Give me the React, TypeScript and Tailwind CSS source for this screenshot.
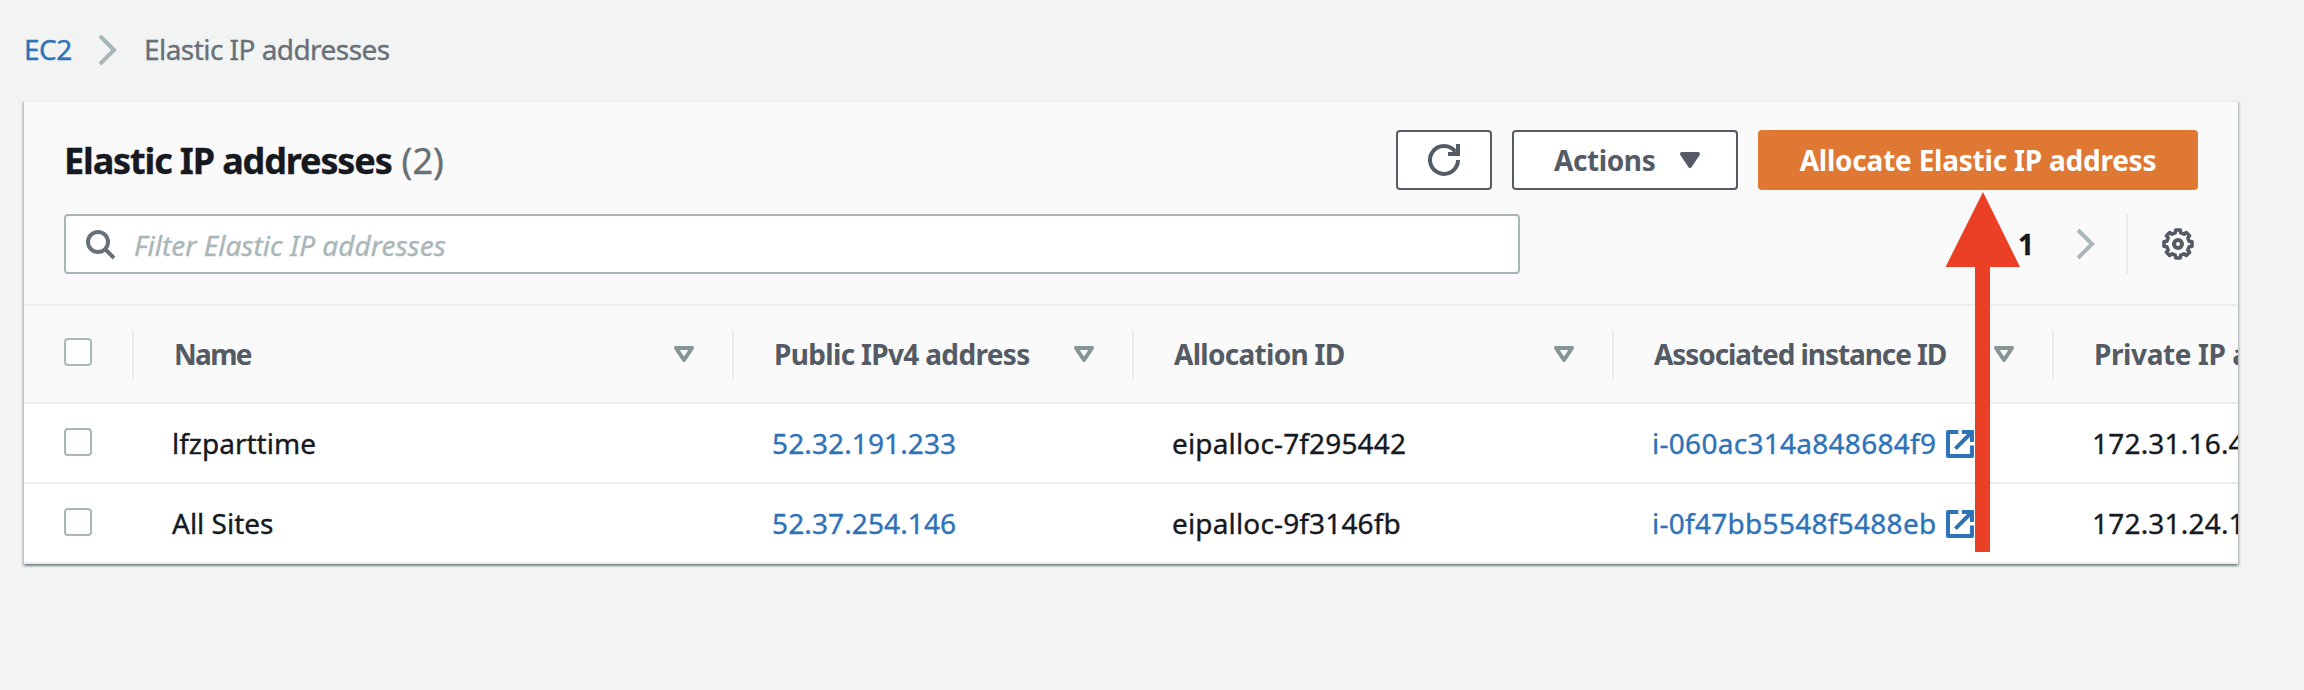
import type { ReactNode } from "react";

type Column = { label: string; width: string; tracking: string; sortable: boolean };

const columns: Column[] = [
  { label: "Name", width: "w-[600px]", tracking: "tracking-[-1.7px]", sortable: true },
  { label: "Public IPv4 address", width: "w-[400px]", tracking: "tracking-[-0.67px]", sortable: true },
  { label: "Allocation ID", width: "w-[480px]", tracking: "tracking-[-0.7px]", sortable: true },
  { label: "Associated instance ID", width: "w-[440px]", tracking: "tracking-[-1.08px]", sortable: true },
  { label: "Private IP address", width: "w-[400px]", tracking: "tracking-[-0.4px]", sortable: false },
];

const rows = [
  {
    name: "lfzparttime",
    publicIp: "52.32.191.233",
    allocation: "eipalloc-7f295442",
    instance: "i-060ac314a848684f9",
    privateIp: "172.31.16.45",
  },
  {
    name: "All Sites",
    publicIp: "52.37.254.146",
    allocation: "eipalloc-9f3146fb",
    instance: "i-0f47bb5548f5488eb",
    privateIp: "172.31.24.12",
  },
];

function Icon({ children, className }: { children: ReactNode; className: string }) {
  return (
    <svg
      viewBox="0 0 16 16"
      fill="none"
      stroke="currentColor"
      strokeWidth={2}
      className={`size-8 shrink-0 overflow-visible ${className}`}
    >
      {children}
    </svg>
  );
}

function ChevronRight({ className }: { className: string }) {
  return (
    <Icon className={className}>
      <path d="M4 1l7 7-7 7" />
    </Icon>
  );
}

function gearPath() {
  const points: string[] = [];
  const corners = [
    [-14, 5.75],
    [-9, 7.1],
    [9, 7.1],
    [14, 5.75],
  ];
  for (let tooth = 0; tooth < 8; tooth++) {
    for (const [offset, radius] of corners) {
      const angle = ((tooth * 45 + offset) * Math.PI) / 180;
      points.push(`${(8 + radius * Math.sin(angle)).toFixed(2)} ${(8 - radius * Math.cos(angle)).toFixed(2)}`);
    }
  }
  return `M${points.join("L")}Z`;
}

function Checkbox({ className }: { className: string }) {
  return <span className={`ml-10 block size-7 rounded-[4px] border-2 border-[#aab7b8] bg-white ${className}`} />;
}

export default function App() {
  return (
    <div className="relative h-[690px] w-[2304px] overflow-hidden bg-[#f2f3f3] font-['Noto_Sans','Open_Sans',sans-serif] text-[28px] leading-[38px] text-[#16191f] [-webkit-text-stroke:0.35px]">
      <nav className="flex h-[100px] items-center pl-6">
        <a className="mb-0.5 w-[68px] tracking-[-0.5px] text-[#2e73b8]">EC2</a>
        <ChevronRight className="text-[#aab7b8]" />
        <span className="mb-0.5 ml-5 tracking-[-0.55px] text-[#687078]">Elastic IP addresses</span>
      </nav>

      <section className="ml-6 w-[2214px] border-t-2 border-[#eaeded] bg-white shadow-[0_2px_2px_0_rgba(0,28,36,0.3),2px_2px_2px_0_rgba(0,28,36,0.15),-2px_2px_2px_0_rgba(0,28,36,0.15)]">
        <div className="overflow-hidden">
          <header className="h-[204px] border-b-2 border-[#eaeded] bg-[#fafafa] pt-7 pr-10 pl-10">
            <div className="flex h-[60px] items-center">
              <h1 className="mt-0.5 text-[36px] leading-[48px] font-bold tracking-[-1.13px]">Elastic IP addresses</h1>
              <span className="mt-0.5 ml-[10px] text-[36px] leading-[48px] text-[#687078]">(2)</span>
              <div className="ml-auto flex gap-5 font-bold text-[#545b64] [-webkit-text-stroke:0px]">
                <button className="flex h-[60px] w-24 items-center justify-center rounded-[4px] border-2 border-[#545b64] bg-white">
                  <Icon className="">
                    <path d="M10 5h5V0" />
                    <path d="M15 8a7 7 0 1 1-1.3-4.1" />
                  </Icon>
                </button>
                <button className="flex h-[60px] w-[226px] items-center rounded-[4px] border-2 border-[#545b64] bg-white pl-10">
                  <span className="w-[120px] text-left tracking-[-0.4px]">Actions</span>
                  <Icon className="">
                    <path d="M4 5h8l-4 6z" fill="currentColor" strokeLinejoin="round" />
                  </Icon>
                </button>
                <button className="flex h-[60px] w-[440px] items-center justify-center rounded-[4px] bg-[#de7832] text-white">
                  <span className="tracking-[-0.22px] whitespace-nowrap">Allocate Elastic IP address</span>
                </button>
              </div>
            </div>

            <div className="mt-6 flex h-[60px] items-center">
              <div className="flex h-[60px] w-[1456px] items-center rounded-[4px] border-2 border-[#aab7b8] bg-white pl-[18px]">
                <Icon className="text-[#687078]">
                  <circle cx="7" cy="7" r="5" />
                  <path d="M15 15l-4.5-4.5" />
                </Icon>
                <span className="mt-0.5 ml-[18px] tracking-[0.03px] text-[#aab7b8] italic">Filter Elastic IP addresses</span>
              </div>
              <div className="ml-auto flex h-[60px] items-center">
                <span className="w-[52px] font-bold">1</span>
                <ChevronRight className="text-[#aab7b8]" />
                <span className="ml-6 h-[60px] w-0.5 bg-[#eaeded]" />
                <Icon className="mr-1 ml-[34px] text-[#545b64]">
                  <path d={gearPath()} strokeWidth={1.8} strokeLinejoin="round" />
                  <circle cx="8" cy="8" r="2" />
                </Icon>
              </div>
            </div>
          </header>

          <div className="flex h-[98px] w-[2430px] items-center border-b-2 border-[#eaeded] bg-[#fafafa] font-bold text-[#545b64] [-webkit-text-stroke:0px]">
            <div className="flex h-12 w-[110px] items-center border-r-2 border-[#eaeded]">
              <Checkbox className="mb-1" />
            </div>
            {columns.map((column) => (
              <div
                key={column.label}
                className={`flex h-12 items-center justify-between border-r-2 border-[#eaeded] pr-8 pl-10 ${column.width}`}
              >
                <span className={`whitespace-nowrap ${column.tracking}`}>{column.label}</span>
                {column.sortable && (
                  <Icon className="text-[#879596]">
                    <path d="M4 5h8l-4 6z" strokeLinejoin="round" />
                  </Icon>
                )}
              </div>
            ))}
          </div>

          {rows.map((row) => (
            <div key={row.name} className="flex h-20 w-[2430px] items-center border-b-2 border-[#eaeded] bg-white">
              <div className="flex w-[110px]">
                <Checkbox className="mb-0.5" />
              </div>
              <div className="w-[600px] pl-[38px]">{row.name}</div>
              <div className="w-[400px] pl-[38px] tracking-[0.12px] text-[#2e73b8]">{row.publicIp}</div>
              <div className="w-[480px] pl-[38px] tracking-[0.15px]">{row.allocation}</div>
              <div className="flex w-[440px] items-center pl-[38px] text-[#2e73b8]">
                <span className="w-[292px] tracking-[0.28px]">{row.instance}</span>
                <Icon className="mt-0.5">
                  <path d="M7.2 2H2v12h12V8.7" strokeLinejoin="round" />
                  <path d="M9 2h5v5" />
                  <path d="M5.7 10.3L14 2" />
                </Icon>
              </div>
              <div className="w-[400px] pl-[38px] tracking-[0.2px]">{row.privateIp}</div>
            </div>
          ))}
        </div>
      </section>

      <svg viewBox="0 0 75 360" className="absolute top-[192px] left-[1945px] h-[360px] w-[75px]">
        <path d="M38 0L75 75H45V360H30V75H0.5Z" fill="#eb4026" />
      </svg>
    </div>
  );
}
